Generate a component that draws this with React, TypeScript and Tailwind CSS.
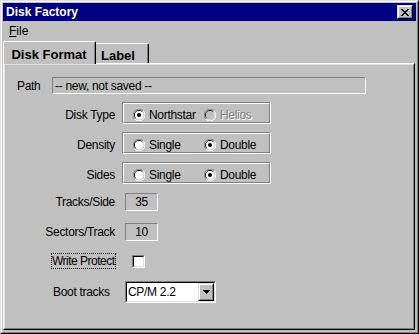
import React from 'react';

function Radio({ checked, disabled }: { checked?: boolean; disabled?: boolean }) {
  return (
    <svg width="12" height="12" viewBox="0 0 12 12" className="shrink-0">
      <path d="M 10.2 1.8 A 5.5 5.5 0 0 0 1.8 10.2" stroke="#808080" fill="none" />
      <path d="M 10.2 1.8 A 5.5 5.5 0 0 1 1.8 10.2" stroke="#ffffff" fill="none" />
      <path d="M 9.2 2.8 A 4.5 4.5 0 0 0 2.8 9.2" stroke="#000000" fill="none" />
      <path d="M 9.2 2.8 A 4.5 4.5 0 0 1 2.8 9.2" stroke="#dfdfdf" fill="none" />
      <circle cx="6" cy="6" r="4" fill={disabled ? '#c0c0c0' : '#ffffff'} />
      {checked && <circle cx="6" cy="6" r="2" fill="#000000" />}
    </svg>
  );
}

function Option({ label, checked, disabled, wide }: { label: string; checked?: boolean; disabled?: boolean; wide?: boolean }) {
  return (
    <div className={wide ? 'flex items-center gap-[4px] w-[71px]' : 'flex items-center gap-[4px]'}>
      <Radio checked={checked} disabled={disabled} />
      {disabled ? (
        <span className="text-[#808080] [text-shadow:1px_1px_0_#ffffff]">{label}</span>
      ) : (
        <span>{label}</span>
      )}
    </div>
  );
}

// etched group box holding a pair of radios
function RadioRow({ label, children }: { label: string; children: React.ReactNode }) {
  return (
    <div className="flex h-[22px]">
      <div className="w-[110px] text-right flex items-center justify-end pt-[4px]">{label}</div>
      <div className="ml-[7px] w-[149px] h-[22px] border border-t-[#808080] border-l-[#808080] border-b-white border-r-white">
        <div className="h-full border border-t-white border-l-white border-b-[#808080] border-r-[#808080] flex items-center pl-[9px] pt-[4px]">
          {children}
        </div>
      </div>
    </div>
  );
}

function NumberRow({ label, value, className }: { label: string; value: string; className?: string }) {
  return (
    <div className={'flex h-[18px] ' + (className ?? '')}>
      <div className="w-[110px] flex items-center justify-end">{label}</div>
      <div className="ml-[10px] w-[33px] h-[18px] border border-t-[#808080] border-l-[#808080] border-b-white border-r-white flex items-center justify-center">
        {value}
      </div>
    </div>
  );
}

export default function App() {
  return (
    <div className="w-[419px] h-[334px] bg-[#c0c0c0] font-['Liberation_Sans',Arial,sans-serif] text-[12px] text-black tracking-[-0.3px] select-none">
      {/* Window frame */}
      <div className="w-full h-full border border-t-[#dfdfdf] border-l-[#dfdfdf] border-b-black border-r-black">
        <div className="w-full h-full border border-t-white border-l-white border-b-[#808080] border-r-[#808080] p-[1px] flex flex-col">
          {/* Title bar */}
          <div className="h-[18px] bg-[#000080] flex items-center justify-between pl-[3px] pr-[3px]">
            <span className="text-white font-bold text-[12px] tracking-normal">Disk Factory</span>
            <div className="w-[16px] h-[14px] border border-t-[#dfdfdf] border-l-[#dfdfdf] border-b-black border-r-black">
              <div className="w-full h-full bg-[#c0c0c0] border border-t-white border-l-white border-b-[#808080] border-r-[#808080] flex items-center justify-center">
                <svg width="8" height="7" viewBox="0 0 8 7">
                  <path d="M0 0h2v1h1v1h2v-1h1v-1h2v1h-1v1h-1v1h-1v1h1v1h1v1h1v1h-2v-1h-1v-1h-2v1h-1v1h-2v-1h1v-1h1v-1h1v-1h-1v-1h-1v-1h-1z" fill="#000" />
                </svg>
              </div>
            </div>
          </div>

          {/* Menu bar */}
          <div className="h-[20px] flex items-center pl-[6px] text-[12px] tracking-normal">
            <span>
              <span className="underline underline-offset-[1px]">F</span>ile
            </span>
          </div>

          {/* Tabs */}
          <div className="h-[22px] flex items-end font-bold text-[13px] tracking-normal">
            <div className="relative z-10 -mb-[1px] w-[93px] h-[23px] bg-[#c0c0c0] border-t border-l border-t-white border-l-white rounded-tl-[2px] rounded-tr-[2px] border-r border-r-black">
              <div className="h-full border-r border-r-[#808080] flex justify-center pt-[3px]">Disk Format</div>
            </div>
            <div className="w-[53px] h-[20px] border-t border-t-white border-r border-r-black rounded-tr-[2px]">
              <div className="h-full border-r border-r-[#808080] pl-[5px] pt-[2px]">Label</div>
            </div>
          </div>

          {/* Tab panel */}
          <div className="w-[412px] h-[267px] border border-t-white border-l-white border-b-black border-r-black">
            <div className="w-full h-full border border-t-[#dfdfdf] border-l-[#dfdfdf] border-b-[#808080] border-r-[#808080] flex flex-col">
              {/* Path */}
              <div className="flex items-center h-[17px] mt-[12px]">
                <div className="w-[47px] pl-[12px]">Path</div>
                <div className="w-[314px] h-[17px] border border-t-[#808080] border-l-[#808080] border-b-white border-r-white flex items-center pl-[2px]">
                  -- new, not saved --
                </div>
              </div>

              <div className="mt-[8px]">
                <RadioRow label="Disk Type">
                  <Option label="Northstar" checked wide />
                  <Option label="Helios" disabled />
                </RadioRow>
              </div>
              <div className="mt-[8px]">
                <RadioRow label="Density">
                  <Option label="Single" wide />
                  <Option label="Double" checked />
                </RadioRow>
              </div>
              <div className="mt-[8px]">
                <RadioRow label="Sides">
                  <Option label="Single" wide />
                  <Option label="Double" checked />
                </RadioRow>
              </div>

              <NumberRow label="Tracks/Side" value="35" className="mt-[9px]" />
              <NumberRow label="Sectors/Track" value="10" className="mt-[12px]" />

              {/* Write protect */}
              <div className="flex items-center h-[16px] mt-[12px]">
                <div className="ml-[46px] w-[65px] h-[16px] border border-dotted border-black flex items-center whitespace-nowrap tracking-[-0.5px]">
                  Write Protect
                </div>
                <div className="ml-[16px] w-[13px] h-[13px] border border-t-[#808080] border-l-[#808080] border-b-white border-r-white">
                  <div className="w-full h-full bg-white border border-t-black border-l-black border-b-[#dfdfdf] border-r-[#dfdfdf]" />
                </div>
              </div>

              {/* Boot tracks */}
              <div className="flex items-center h-[22px] mt-[12px]">
                <div className="ml-[48px] w-[72px]">Boot tracks</div>
                <div className="w-[91px] h-[22px] border border-t-[#808080] border-l-[#808080] border-b-white border-r-white">
                  <div className="w-full h-full bg-white border border-t-black border-l-black border-b-[#dfdfdf] border-r-[#dfdfdf] flex items-center">
                    <span className="flex-1 pl-[1px]">CP/M 2.2</span>
                    <div className="w-[16px] h-[18px] border border-t-[#dfdfdf] border-l-[#dfdfdf] border-b-black border-r-black">
                      <div className="w-full h-full bg-[#c0c0c0] border border-t-white border-l-white border-b-[#808080] border-r-[#808080] flex items-center justify-center">
                        <svg width="7" height="4" viewBox="0 0 7 4">
                          <path d="M0 0h7v1h-1v1h-1v1h-1v1h-1v-1h-1v-1h-1v-1h-1z" fill="#000" />
                        </svg>
                      </div>
                    </div>
                  </div>
                </div>
              </div>
            </div>
          </div>
        </div>
      </div>
    </div>
  );
}
